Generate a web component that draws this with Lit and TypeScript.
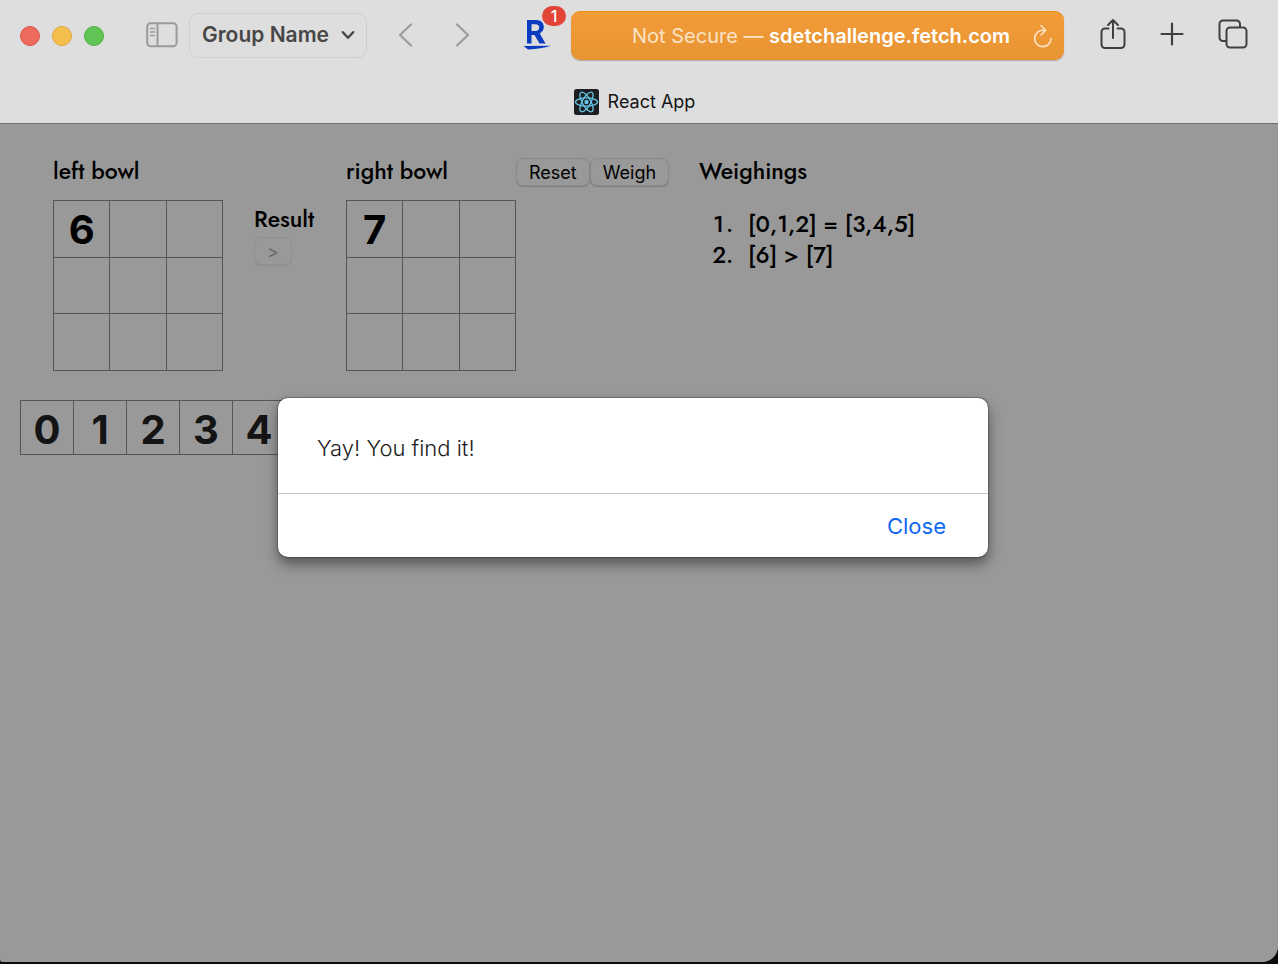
import { LitElement, html, css, svg } from "lit";
import { customElement, property, state } from "lit/decorators.js";

@customElement("bowl-board")
class BowlBoard extends LitElement {
  @property() label = "";
  @property({ type: Array }) bars: string[] = [];

  static styles = css`
    :host { display: block; }
    .title {
      margin: 0;
      font: 500 23px/32px Jost, Futura, Lato, sans-serif;
    }
    .grid {
      display: grid;
      grid-template-columns: repeat(3, 1fr);
      gap: 1px;
      width: 170px;
      height: 171px;
      box-sizing: border-box;
      margin-top: 13px;
      padding: 1px;
      background: #909090;
    }
    .cell {
      min-width: 0;
      min-height: 0;
      margin: 0;
      padding: 3px 0 0;
      border: 0;
      border-radius: 0;
      background: #fff;
      color: #000;
      text-align: center;
      font: 700 40px/48px Inter, sans-serif;
    }
  `;

  render() {
    const cells = Array.from({ length: 9 }, (_, i) => this.bars[i] ?? "");
    return html`
      <h2 class="title">${this.label}</h2>
      <div class="grid">
        ${cells.map((v, i) => html`<input class="cell" maxlength="1" aria-label="${this.label} ${i + 1}" .value=${v}>`)}
      </div>
    `;
  }
}

@customElement("browser-bar")
class BrowserBar extends LitElement {
  static styles = css`
    :host {
      display: block;
      background: #dedede;
      border-bottom: 1px solid #6f6f6f;
      font-family: Inter, sans-serif;
    }
    button {
      display: flex;
      align-items: center;
      margin: 0;
      padding: 0;
      border: 0;
      background: none;
      color: inherit;
      font: inherit;
    }
    svg { display: block; fill: none; }
    .row {
      display: flex;
      align-items: center;
      height: 71px;
      padding: 0 30px 0 20px;
    }
    .lights { display: flex; gap: 12px; }
    .light { width: 20px; height: 20px; border-radius: 50%; border: 1px solid; box-sizing: border-box; }
    .red { background: #ed6a5e; border-color: #e05247; }
    .yellow { background: #f5bf4f; border-color: #dfa638; }
    .green { background: #61c555; border-color: #4bae3c; }
    .sidebar { margin-left: 42px; padding-bottom: 2px; }
    .group {
      gap: 12px;
      height: 45px;
      box-sizing: border-box;
      margin-left: 11px;
      padding: 0 11px 2px 12px;
      border: 1px solid #cfcfcf;
      border-radius: 9px;
      color: #474747;
      font-size: 21px;
      font-weight: 600;
      white-space: nowrap;
    }
    .nav { display: flex; gap: 42px; margin-left: 31px; padding-bottom: 2px; }
    .ext { position: relative; margin: 0 20px 0 53px; padding-bottom: 2px; }
    .count {
      position: absolute;
      left: 19px;
      top: -13px;
      width: 24px;
      height: 20px;
      border-radius: 10px;
      background: #e24435;
      color: #fff;
      font: 500 16px/20px Inter, sans-serif;
      text-align: center;
    }
    .address {
      display: flex;
      align-items: center;
      justify-content: flex-end;
      flex: 1;
      height: 49px;
      box-sizing: border-box;
      gap: 23px;
      padding: 0 11px 0 16px;
      border-top: 1px solid #f09010;
      border-radius: 9px;
      background: linear-gradient(#f29c38, #e79434);
      box-shadow: 0 1px 1px #a8a8a8;
      color: #fff;
      font-size: 20px;
      white-space: nowrap;
    }
    .warn { color: #fce3c6; }
    .host { font-weight: 600; }
    .tools { display: flex; align-items: center; gap: 34px; margin-left: 36px; padding-bottom: 4px; color: #404040; }
    .tab {
      display: flex;
      align-items: center;
      justify-content: center;
      gap: 9px;
      height: 43px;
      padding: 9px 9px 0 0;
      color: #151515;
      font-size: 18px;
    }
  `;

  render() {
    return html`
      <div class="row">
        <div class="lights">
          <button class="light red" aria-label="Close window"></button>
          <button class="light yellow" aria-label="Minimize window"></button>
          <button class="light green" aria-label="Zoom window"></button>
        </div>
        <button class="sidebar" aria-label="Sidebar">
          <svg width="32" height="26" viewBox="0 0 32 26" stroke="#9a9a9a" stroke-width="2">
            <rect x="1.2" y="1.2" width="29.4" height="23" rx="3.5"/>
            <path d="M11.5 1v23.5"/>
            <path d="M4.5 6.5h4M4.5 10h4M4.5 13.5h4" stroke-width="1.4" stroke-linecap="round"/>
          </svg>
        </button>
        <button class="group">
          Group Name
          <svg width="14" height="10" viewBox="0 0 14 10" stroke="currentColor" stroke-width="2.4" stroke-linecap="round" stroke-linejoin="round"><path d="M1.8 2.2 7 7.8l5.200-5.600"/></svg>
        </button>
        <div class="nav">
          <button aria-label="Back"><svg width="15" height="24" viewBox="0 0 15 24" stroke="#9c9c9c" stroke-width="2.200" stroke-linecap="round" stroke-linejoin="round"><path d="M13 1.500 2 12l11 10.500"/></svg></button>
          <button aria-label="Forward"><svg width="15" height="24" viewBox="0 0 15 24" stroke="#9c9c9c" stroke-width="2.200" stroke-linecap="round" stroke-linejoin="round"><path d="M2 1.500 13 12 2 22.500"/></svg></button>
        </div>
        <button class="ext" aria-label="Shopping extension">
          <svg width="28" height="31" viewBox="0 0 28 31" fill="#0a3cc0">
            <path fill="#0a3cc0" fill-rule="evenodd" d="M4 1h9c5 0 7.800 2.800 7.800 7 0 3-1.600 5.200-4 6.400L22.500 24.500h-6L11.500 16H8.500v8.500H4ZM8.500 5.200v6.800h4.200c2.200 0 3.500-1.300 3.500-3.400s-1.300-3.400-3.500-3.400Z"/>
            <path fill="#0a3cc0" d="M.5 27 28 26.800Q18 30 5 30.500Z"/>
          </svg>
          <span class="count">1</span>
        </button>
        <div class="address">
          <span><span class="warn">Not Secure — </span><span class="host">sdetchallenge.fetch.com</span></span>
          <button aria-label="Reload">
            <svg width="20" height="24" viewBox="0 0 20 24" stroke="#fce3c6" stroke-width="1.600" stroke-linecap="round" stroke-linejoin="round"><path d="M10.500 6.300A8.200 8.200 0 1 0 18 14.500M8 1.500l4.600 4.900L8 11"/></svg>
          </button>
        </div>
        <div class="tools">
          <button aria-label="Share"><svg width="26" height="32" viewBox="0 0 26 32" stroke="currentColor" stroke-width="2" stroke-linecap="round" stroke-linejoin="round"><path d="M8.500 10.500H5A3.500 3.500 0 0 0 1.500 14v12.500A3.500 3.500 0 0 0 5 30h16a3.500 3.500 0 0 0 3.500-3.500V14a3.500 3.500 0 0 0-3.500-3.500h-3.500M13 20V2M8 7l5-5 5 5"/></svg></button>
          <button aria-label="New tab"><svg width="24" height="24" viewBox="0 0 24 24" stroke="currentColor" stroke-width="2.200" stroke-linecap="round"><path d="M12 1.500v21M1.500 12h21"/></svg></button>
          <button aria-label="Tab overview"><svg width="30" height="30" viewBox="0 0 30 30" stroke="currentColor" stroke-width="2" stroke-linejoin="round"><rect x="8.500" y="8.500" width="20" height="20" rx="3.500"/><path d="M8 22H5A3.500 3.500 0 0 1 1.500 18.500V5A3.500 3.500 0 0 1 5 1.500h13.500A3.500 3.500 0 0 1 22 5v3"/></svg></button>
        </div>
      </div>
      <div class="tab">
        <svg width="25" height="26" viewBox="0 0 25 26" stroke="#67c5e4" stroke-width="1.300">
          <rect width="25" height="26" rx="2.500" fill="#1c1e22" stroke="none"/>
          ${[0, 60, 120].map((a) => svg`<ellipse cx="12.500" cy="13" rx="11" ry="4.200" transform="rotate(${a} 12.500 13)"/>`)}
          <circle cx="12.500" cy="13" r="2.200" fill="#67c5e4" stroke="none"/>
        </svg>
        <span>React App</span>
      </div>
    `;
  }
}

@customElement("app-root")
class AppRoot extends LitElement {
  @state() private open = true;

  static styles = css`
    :host {
      display: block;
      min-height: 100vh;
      background: #0c0c0c;
    }
    .window {
      display: flex;
      flex-direction: column;
      min-height: calc(100vh - 2px);
      border-radius: 0 0 16px 3px;
      overflow: hidden;
      background: #fff;
    }
    .page {
      position: relative;
      flex: 1;
      padding: 31px 20px;
      font-family: Inter, sans-serif;
    }
    .game { display: flex; align-items: flex-start; padding-left: 33px; }
    .heading {
      margin: 0;
      font: 500 23px/32px Jost, Futura, Lato, sans-serif;
    }
    .result { width: 92px; margin: 48px 0 0 31px; }
    .result .key { margin-top: 2px; }
    button { font-family: inherit; margin: 0; }
    .key {
      height: 28px;
      box-sizing: border-box;
      padding: 0 12px;
      border: 1px solid #e4e4e4;
      border-radius: 7px;
      background: #fff;
      box-shadow: 0 1px 1px #d2d2d2;
      color: #000;
      font-size: 18px;
    }
    .key:disabled { color: #b0b0b0; border-color: #f0f0f0; box-shadow: 0 1px 1px #ececec; }
    .actions { display: flex; padding-top: 3px; }
    .history { margin-left: 30px; }
    .list {
      margin: 22px 0 0;
      padding-left: 41px;
      font: 500 23px/31px Jost, Futura, Lato, sans-serif;
    }
    .list li { padding-left: 8px; }
    .coins { display: flex; margin-top: 29px; }
    .coin {
      width: 54px;
      height: 55px;
      padding: 4px 0 0;
      border: 1px solid #909090;
      background: #fff;
      color: #222;
      font-size: 40px;
      font-weight: 700;
      line-height: 48px;
    }
    .coin + .coin { margin-left: -1px; }
    .scrim {
      position: absolute;
      inset: 0;
      box-sizing: border-box;
      display: flex;
      align-items: flex-start;
      justify-content: center;
      padding: 274px 12px 0 0;
      background: rgba(0, 0, 0, 0.4);
    }
    .alert {
      width: 710px;
      max-width: 100%;
      border-radius: 10px;
      background: #fff;
      box-shadow: 0 0 1px 1px rgba(0, 0, 0, 0.25), 0 7px 14px rgba(0, 0, 0, 0.45);
      font-size: 22px;
    }
    .message {
      margin: 0;
      padding: 34px 39px 29px;
      border-bottom: 1px solid #c6c6c6;
      color: #1c1c1c;
      font-weight: 300;
      line-height: 32px;
    }
    .footer { display: flex; justify-content: flex-end; padding: 16px 42px 15px; }
    .close {
      padding: 0;
      border: 0;
      background: none;
      color: #1268f3;
      font-size: 22px;
      line-height: 32px;
    }
  `;

  render() {
    return html`
      <div class="window">
        <browser-bar></browser-bar>
        <main class="page">
          <div class="game">
            <bowl-board label="left bowl" .bars=${["6"]}></bowl-board>
            <section class="result">
              <h2 class="heading">Result</h2>
              <button class="key" disabled>&gt;</button>
            </section>
            <bowl-board label="right bowl" .bars=${["7"]}></bowl-board>
            <div class="actions">
              <button class="key">Reset</button>
              <button class="key">Weigh</button>
            </div>
            <section class="history">
              <h2 class="heading">Weighings</h2>
              <ol class="list">
                <li>[0,1,2] = [3,4,5]</li>
                <li>[6] &gt; [7]</li>
              </ol>
            </section>
          </div>
          <div class="coins">
            ${[0, 1, 2, 3, 4].map((n) => html`<button class="coin">${n}</button>`)}
          </div>
          ${this.open
            ? html`<div class="scrim">
                <div class="alert" role="alertdialog" aria-labelledby="message">
                  <p class="message" id="message">Yay! You find it!</p>
                  <div class="footer">
                    <button class="close" @click=${() => (this.open = false)}>Close</button>
                  </div>
                </div>
              </div>`
            : null}
        </main>
      </div>
    `;
  }
}
